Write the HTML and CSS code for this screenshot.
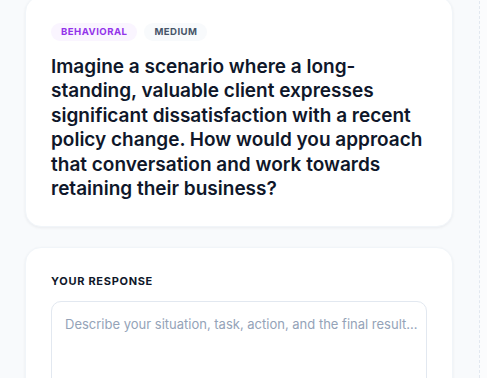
FILE: index.html
```html
<!DOCTYPE html>
<html>
<head>
<meta charset="utf-8">
<link rel="stylesheet" href="styles.css">
</head>
<body>
<div class="layout">
  <main class="main">
    <section class="card question">
      <div class="tags">
        <span class="tag tag-type">BEHAVIORAL</span>
        <span class="tag tag-level">MEDIUM</span>
      </div>
      <h1 class="q-text">Imagine a scenario where a long-standing, valuable client expresses significant dissatisfaction with a recent policy change. How would you approach that conversation and work towards retaining their business?</h1>
    </section>
    <section class="card response">
      <div class="label">YOUR RESPONSE</div>
      <div class="textarea"><span class="placeholder">Describe your situation, task, action, and the final result...</span></div>
    </section>
  </main>
  <aside class="side"></aside>
</div>
</body>
</html>
```
FILE: styles.css
```css
* { box-sizing: border-box; }
html, body { margin: 0; padding: 0; }
body {
  background: #f8fafc;
  font-family: Inter, "Noto Sans", sans-serif;
  color: #0f172a;
  width: 487px;
  height: 378px;
  overflow: hidden;
}
.layout {
  display: flex;
  gap: 26px;
  padding-left: 25px;
  margin-top: -4px;
  height: 382px;
  overflow: hidden;
}
.main {
  width: 428px;
  flex: none;
  display: flex;
  flex-direction: column;
  gap: 20px;
}
.card {
  background: #ffffff;
  border-radius: 16px;
  box-shadow: 0 1px 3px rgba(15, 23, 42, 0.06);
  border: 1px solid #f1f5f9;
}
.question {
  padding: 26px 25px 25px 25px;
}
.tags {
  display: flex;
  gap: 7px;
  margin-bottom: 14px;
}
.tag {
  font-size: 9.6px;
  font-weight: 700;
  letter-spacing: 0.45px;
  padding: 0 10px;
  height: 18px;
  line-height: 18px;
  border-radius: 9px;
}
.tag-type { color: #9333ea; background: #faf5ff; }
.tag-level { color: #475569; background: #f8fafc; }
.q-text {
  margin: 0;
  font-size: 19px;
  line-height: 24.4px;
  font-weight: 600;
  color: #0f172a;
  letter-spacing: 0;
}
.response {
  padding: 26px 25px 20px 25px;
  height: 200px;
}
.label {
  font-size: 11px;
  font-weight: 700;
  letter-spacing: 0.7px;
  color: #0f172a;
  margin-bottom: 13px;
}
.textarea {
  border: 1px solid #e2e8f0;
  border-radius: 10px;
  padding: 11px 13px;
  height: 160px;
}
.placeholder {
  font-size: 13px;
  color: #94a3b8;
  white-space: nowrap;
}
.side {
  flex: 1;
  border-left: 1px dashed #e2e8f0;
  background: #fbfcfd;
}
```
